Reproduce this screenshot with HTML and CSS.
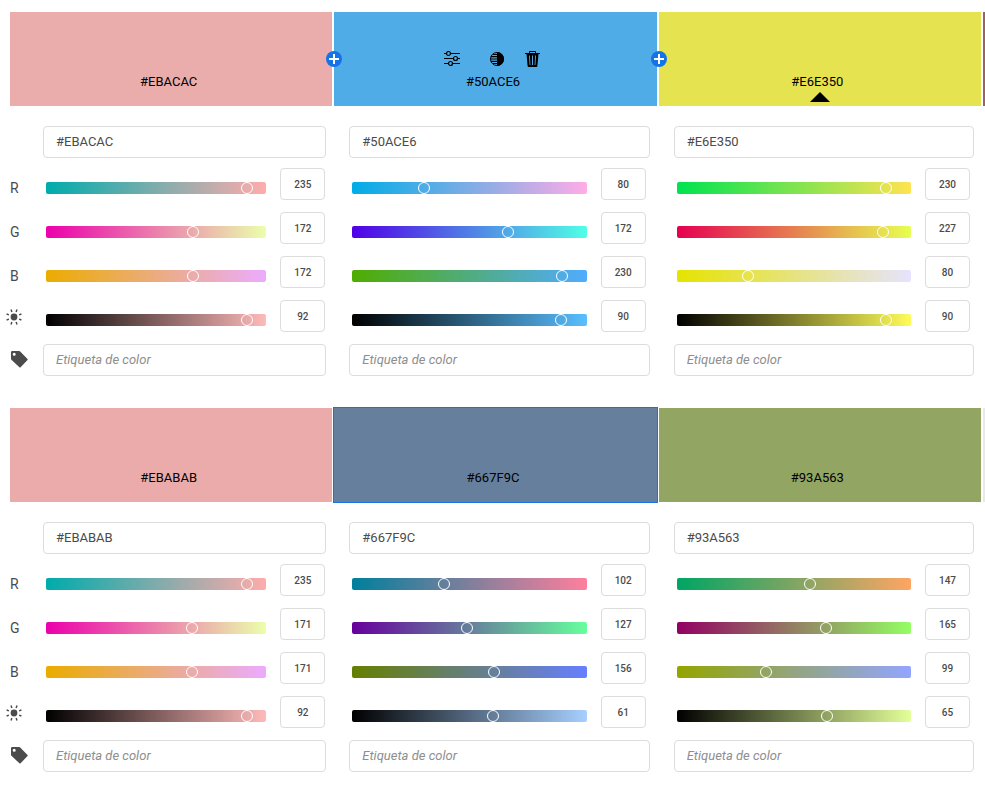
FILE: index.html
```html
<!DOCTYPE html>
<html lang="es">
<head>
<meta charset="utf-8">
<title>Colores</title>
<link rel="stylesheet" href="styles.css">
</head>
<body>
<svg class="defs" aria-hidden="true">
  <symbol id="sun" viewBox="0 0 16 16">
    <circle cx="8" cy="8" r="3.4" fill="#4b4b4b"/>
    <g stroke="#4b4b4b" stroke-width="1.5"><path d="M10.1 2.900 11 .6M13.100 5.900 15.400 5M13.100 10.100 15.400 11M10.100 13.100 11 15.400M5.900 13.100 5 15.400M2.900 10.100.6 11M2.900 5.900.6 5M5.900 2.900 5 .6"/></g>
  </symbol>
  <symbol id="tag" viewBox="0 0 18 18">
    <path fill="#4b4b4b" fill-rule="evenodd" d="M1 2.2Q1 1 2.200 1H9.200Q9.800 1 10.200 1.400L17.500 9Q18 9.600 17.500 10.100L10.600 17.300Q10 17.800 9.400 17.300L1.400 9.700Q1 9.300 1 8.700ZM4.200 2.700A1.500 1.500 0 1 0 4.200 5.700A1.500 1.500 0 1 0 4.200 2.700Z"/>
  </symbol>
  <symbol id="plus" viewBox="0 0 16 16">
    <circle cx="8" cy="8" r="8" fill="#1473e6"/><path stroke="#fff" stroke-width="2" d="M8 3V13M3 8H13"/>
  </symbol>
</svg>
<main class="page">
  <section class="palette">
    <div class="swatches">
      <div class="swatch" style="background:#ebacac"><span class="code">#EBACAC</span></div>
      <div class="swatch" style="background:#50ace6">
        <button class="add" aria-label="Añadir color"><svg><use href="#plus"/></svg></button>
        <div class="tools">
          <button aria-label="Ajustar"><svg width="16" height="16" viewBox="0 0 16 16" fill="none" stroke="#000" stroke-width="1.2"><path d="M0 2.500H2.500M6.500 2.500H16M0 7.500H9.500M13.500 7.500H16M0 12.500H4.500M8.500 12.500H16"/><circle cx="4.500" cy="2.500" r="2"/><circle cx="11.500" cy="7.500" r="2"/><circle cx="6.500" cy="12.500" r="2"/></svg></button>
          <button aria-label="Contraste"><svg width="14" height="14" viewBox="0 0 14 14"><path d="M7 0A7 7 0 0 1 7 14Z"/><circle cx="7" cy="7" r="6.500" fill="none" stroke="#000"/><path stroke="#000" stroke-width="1.200" d="M3 2.500H7M1 4.700H7M.5 7H7M1 9.300H7M3 11.500H7"/></svg></button>
          <button aria-label="Eliminar"><svg width="15" height="16" viewBox="0 0 15 16"><path fill-rule="evenodd" d="M4 2V.8Q4 0 4.800 0H10.200Q11 0 11 .8V2H15V3H13.500L12.400 15Q12.300 16 11.300 16H3.700Q2.700 16 2.600 15L1.500 3H0V2ZM5 1V2H10V1ZM4 4.500 4.600 14H5.400L4.900 4.500ZM7 4.500V14H8V4.500ZM10.100 4.500 9.600 14H10.400L11 4.500Z"/></svg></button>
        </div>
        <span class="code">#50ACE6</span>
      </div>
      <div class="swatch" style="background:#e6e350">
        <button class="add" aria-label="Añadir color"><svg><use href="#plus"/></svg></button>
        <span class="code">#E6E350</span><i class="base"></i>
      </div>
      <div class="swatch" style="background:#966464"></div>
    </div>
    <div class="editors">
      <div class="editor first">
        <div class="line head"><input class="field" aria-label="Hexadecimal" value="#EBACAC"></div>
        <div class="line"><label class="name" for="a-r">R</label><div class="channel"><div class="track" style="--from:#00acac;--to:#ffacac"><input type="range" id="a-r" max="255" value="235"></div><input class="number" aria-label="R" value="235"></div></div>
        <div class="line"><label class="name" for="a-g">G</label><div class="channel"><div class="track" style="--from:#eb00ac;--to:#ebffac"><input type="range" id="a-g" max="255" value="172"></div><input class="number" aria-label="G" value="172"></div></div>
        <div class="line"><label class="name" for="a-b">B</label><div class="channel"><div class="track" style="--from:#ebac00;--to:#ebacff"><input type="range" id="a-b" max="255" value="172"></div><input class="number" aria-label="B" value="172"></div></div>
        <div class="line"><label class="name icon sun" for="a-l" aria-label="Brillo"><svg><use href="#sun"/></svg></label><div class="channel"><div class="track" style="--from:#000;--to:#ffbaba"><input type="range" id="a-l" max="100" value="92"></div><input class="number" aria-label="Brillo" value="92"></div></div>
        <div class="line"><label class="name icon tag" for="a-t" aria-label="Etiqueta"><svg><use href="#tag"/></svg></label><input class="field" id="a-t" placeholder="Etiqueta de color"></div>
      </div>
      <div class="editor">
        <div class="line head"><input class="field" aria-label="Hexadecimal" value="#50ACE6"></div>
        <div class="line"><div class="channel"><div class="track" style="--from:#00ace6;--to:#fface6"><input type="range" aria-label="R" max="255" value="80"></div><input class="number" aria-label="R" value="80"></div></div>
        <div class="line"><div class="channel"><div class="track" style="--from:#5000e6;--to:#50ffe6"><input type="range" aria-label="G" max="255" value="172"></div><input class="number" aria-label="G" value="172"></div></div>
        <div class="line"><div class="channel"><div class="track" style="--from:#50ac00;--to:#50acff"><input type="range" aria-label="B" max="255" value="230"></div><input class="number" aria-label="B" value="230"></div></div>
        <div class="line"><div class="channel"><div class="track" style="--from:#000;--to:#59bfff"><input type="range" aria-label="Brillo" max="100" value="90"></div><input class="number" aria-label="Brillo" value="90"></div></div>
        <div class="line"><input class="field" aria-label="Etiqueta" placeholder="Etiqueta de color"></div>
      </div>
      <div class="editor">
        <div class="line head"><input class="field" aria-label="Hexadecimal" value="#E6E350"></div>
        <div class="line"><div class="channel"><div class="track" style="--from:#00e350;--to:#ffe350"><input type="range" aria-label="R" max="255" value="230"></div><input class="number" aria-label="R" value="230"></div></div>
        <div class="line"><div class="channel"><div class="track" style="--from:#e60050;--to:#e6ff50"><input type="range" aria-label="G" max="255" value="227"></div><input class="number" aria-label="G" value="227"></div></div>
        <div class="line"><div class="channel"><div class="track" style="--from:#e6e300;--to:#e6e3ff"><input type="range" aria-label="B" max="255" value="80"></div><input class="number" aria-label="B" value="80"></div></div>
        <div class="line"><div class="channel"><div class="track" style="--from:#000;--to:#fffc59"><input type="range" aria-label="Brillo" max="100" value="90"></div><input class="number" aria-label="Brillo" value="90"></div></div>
        <div class="line"><input class="field" aria-label="Etiqueta" placeholder="Etiqueta de color"></div>
      </div>
    </div>
  </section>
  <section class="palette">
    <div class="swatches">
      <div class="swatch" style="background:#ebabab"><span class="code">#EBABAB</span></div>
      <div class="swatch selected" style="background:#667f9c"><span class="code">#667F9C</span></div>
      <div class="swatch" style="background:#93a563"><span class="code">#93A563</span></div>
      <div class="swatch" style="background:#e8e8e8"></div>
    </div>
    <div class="editors">
      <div class="editor first">
        <div class="line head"><input class="field" aria-label="Hexadecimal" value="#EBABAB"></div>
        <div class="line"><label class="name" for="b-r">R</label><div class="channel"><div class="track" style="--from:#00abab;--to:#ffabab"><input type="range" id="b-r" max="255" value="235"></div><input class="number" aria-label="R" value="235"></div></div>
        <div class="line"><label class="name" for="b-g">G</label><div class="channel"><div class="track" style="--from:#eb00ab;--to:#ebffab"><input type="range" id="b-g" max="255" value="171"></div><input class="number" aria-label="G" value="171"></div></div>
        <div class="line"><label class="name" for="b-b">B</label><div class="channel"><div class="track" style="--from:#ebab00;--to:#ebabff"><input type="range" id="b-b" max="255" value="171"></div><input class="number" aria-label="B" value="171"></div></div>
        <div class="line"><label class="name icon sun" for="b-l" aria-label="Brillo"><svg><use href="#sun"/></svg></label><div class="channel"><div class="track" style="--from:#000;--to:#ffbaba"><input type="range" id="b-l" max="100" value="92"></div><input class="number" aria-label="Brillo" value="92"></div></div>
        <div class="line"><label class="name icon tag" for="b-t" aria-label="Etiqueta"><svg><use href="#tag"/></svg></label><input class="field" id="b-t" placeholder="Etiqueta de color"></div>
      </div>
      <div class="editor">
        <div class="line head"><input class="field" aria-label="Hexadecimal" value="#667F9C"></div>
        <div class="line"><div class="channel"><div class="track" style="--from:#007f9c;--to:#ff7f9c"><input type="range" aria-label="R" max="255" value="102"></div><input class="number" aria-label="R" value="102"></div></div>
        <div class="line"><div class="channel"><div class="track" style="--from:#66009c;--to:#66ff9c"><input type="range" aria-label="G" max="255" value="127"></div><input class="number" aria-label="G" value="127"></div></div>
        <div class="line"><div class="channel"><div class="track" style="--from:#667f00;--to:#667fff"><input type="range" aria-label="B" max="255" value="156"></div><input class="number" aria-label="B" value="156"></div></div>
        <div class="line"><div class="channel"><div class="track" style="--from:#000;--to:#a7d0ff"><input type="range" aria-label="Brillo" max="100" value="61"></div><input class="number" aria-label="Brillo" value="61"></div></div>
        <div class="line"><input class="field" aria-label="Etiqueta" placeholder="Etiqueta de color"></div>
      </div>
      <div class="editor">
        <div class="line head"><input class="field" aria-label="Hexadecimal" value="#93A563"></div>
        <div class="line"><div class="channel"><div class="track" style="--from:#00a563;--to:#ffa563"><input type="range" aria-label="R" max="255" value="147"></div><input class="number" aria-label="R" value="147"></div></div>
        <div class="line"><div class="channel"><div class="track" style="--from:#930063;--to:#93ff63"><input type="range" aria-label="G" max="255" value="165"></div><input class="number" aria-label="G" value="165"></div></div>
        <div class="line"><div class="channel"><div class="track" style="--from:#93a500;--to:#93a5ff"><input type="range" aria-label="B" max="255" value="99"></div><input class="number" aria-label="B" value="99"></div></div>
        <div class="line"><div class="channel"><div class="track" style="--from:#000;--to:#e3ff99"><input type="range" aria-label="Brillo" max="100" value="65"></div><input class="number" aria-label="Brillo" value="65"></div></div>
        <div class="line"><input class="field" aria-label="Etiqueta" placeholder="Etiqueta de color"></div>
      </div>
    </div>
  </section>
</main>
</body>
</html>
```
FILE: styles.css
```css
* { box-sizing: border-box; }
body {
  margin: 0;
  background: #fff;
  color: #4b4b4b;
  font: 13px/16px Roboto, sans-serif;
}
button { padding: 0; border: 0; background: none; }
input { font: inherit; color: inherit; min-width: 0; }
svg { display: block; }
.defs { position: absolute; width: 0; height: 0; }
.page { padding: 12px 0 16px 10px; display: grid; gap: 32px; }

.swatches, .editors {
  display: grid;
  grid-template-columns: repeat(3, minmax(0, 1fr)) 2px;
  gap: 2px;
}
.swatch {
  position: relative;
  height: 94px;
  display: flex;
  flex-direction: column;
  justify-content: flex-end;
  align-items: center;
  padding-bottom: 16px;
}
.selected { outline: 1px solid #1473e6; }
.code { color: #000; padding-right: 5px; }
.tools {
  width: 100%;
  display: flex;
  align-items: center;
  justify-content: center;
  gap: 21px;
  padding: 0 6px 7px 0;
}
.tools button:first-child { margin-right: 9px; }
.add { position: absolute; left: -8px; top: 39px; }
.add svg { width: 16px; height: 16px; }
.base {
  position: absolute;
  bottom: 4px;
  border: 10px solid transparent;
  border-top: 0;
  border-bottom-color: #000;
}

.editors { padding-top: 20px; }
.editor { display: grid; gap: 12px; padding: 0 7px 0 15px; }
.first { padding: 0 6px 0 0; }
.line { display: flex; height: 32px; }
.head { margin-bottom: -2px; }
.first .head { padding-left: 33px; }
.name { flex: none; width: 33px; padding-top: 12px; font-size: 14px; }
.icon { padding-top: 9px; }
.sun svg { width: 16px; height: 16px; margin-left: -4px; }
.tag { padding-top: 6px; }
.tag svg { width: 18px; height: 18px; }
.field, .number {
  border: 1px solid #dcdcdc;
  border-radius: 4px;
  background: #fff;
  height: 32px;
}
.field { flex: 1; padding: 0 12px 2px; }
.field::placeholder { color: #8e8e8e; font-style: italic; opacity: 1; }
.channel { flex: 1; display: flex; gap: 14px; padding: 0 4px 0 3px; }
.first .channel { padding-right: 1px; }
.number { flex: none; width: 45px; padding: 0; text-align: center; font-size: 10px; font-weight: 500; }
.track {
  flex: 1;
  height: 12px;
  margin-top: 14px;
  border-radius: 2px;
  background: linear-gradient(to right, var(--from), var(--to));
}
.track input {
  appearance: none;
  display: block;
  width: calc(100% + 12px);
  height: 12px;
  margin: 0 -8px;
  background: none;
}
.track input::-webkit-slider-thumb {
  appearance: none;
  width: 12px;
  height: 12px;
  border: 1px solid #fff;
  border-radius: 50%;
  background: transparent;
}
```
